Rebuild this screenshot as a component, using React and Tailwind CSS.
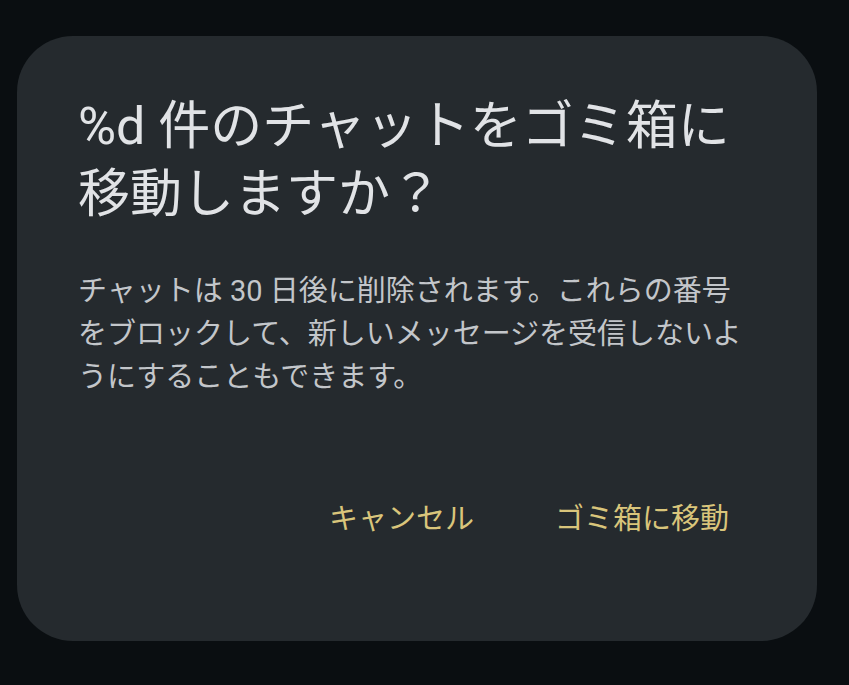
export default function App() {
  const font = { fontFamily: 'Roboto, "Noto Sans CJK JP", sans-serif' };
  return (
    <div className="w-[849px] h-[685px] bg-[#0a0e11] pt-[36px] pl-[17px]" style={font}>
      <div className="w-[800px] h-[605px] bg-[#252a2e] rounded-[56px] pl-[61px] pr-[60px] pt-[57px] flex flex-col">
        <h1 className="w-[670px] text-[52px] leading-[68px] text-[#e1e3e6] font-normal">
          %d 件のチャットをゴミ箱に移動しますか？
        </h1>
        <p className="mt-[41px] text-[29px] leading-[43px] text-[#c3c6ca]">
          チャットは 30 日後に削除されます。これらの番号をブロックして、新しいメッセージを受信しないようにすることもできます。
        </p>
        <div className="mt-[99px] flex justify-end gap-[81px] pr-[28px] text-[29px] leading-[43px] text-[#d9c57b]">
          <button className="bg-transparent">キャンセル</button>
          <button className="bg-transparent">ゴミ箱に移動</button>
        </div>
      </div>
    </div>
  );
}
